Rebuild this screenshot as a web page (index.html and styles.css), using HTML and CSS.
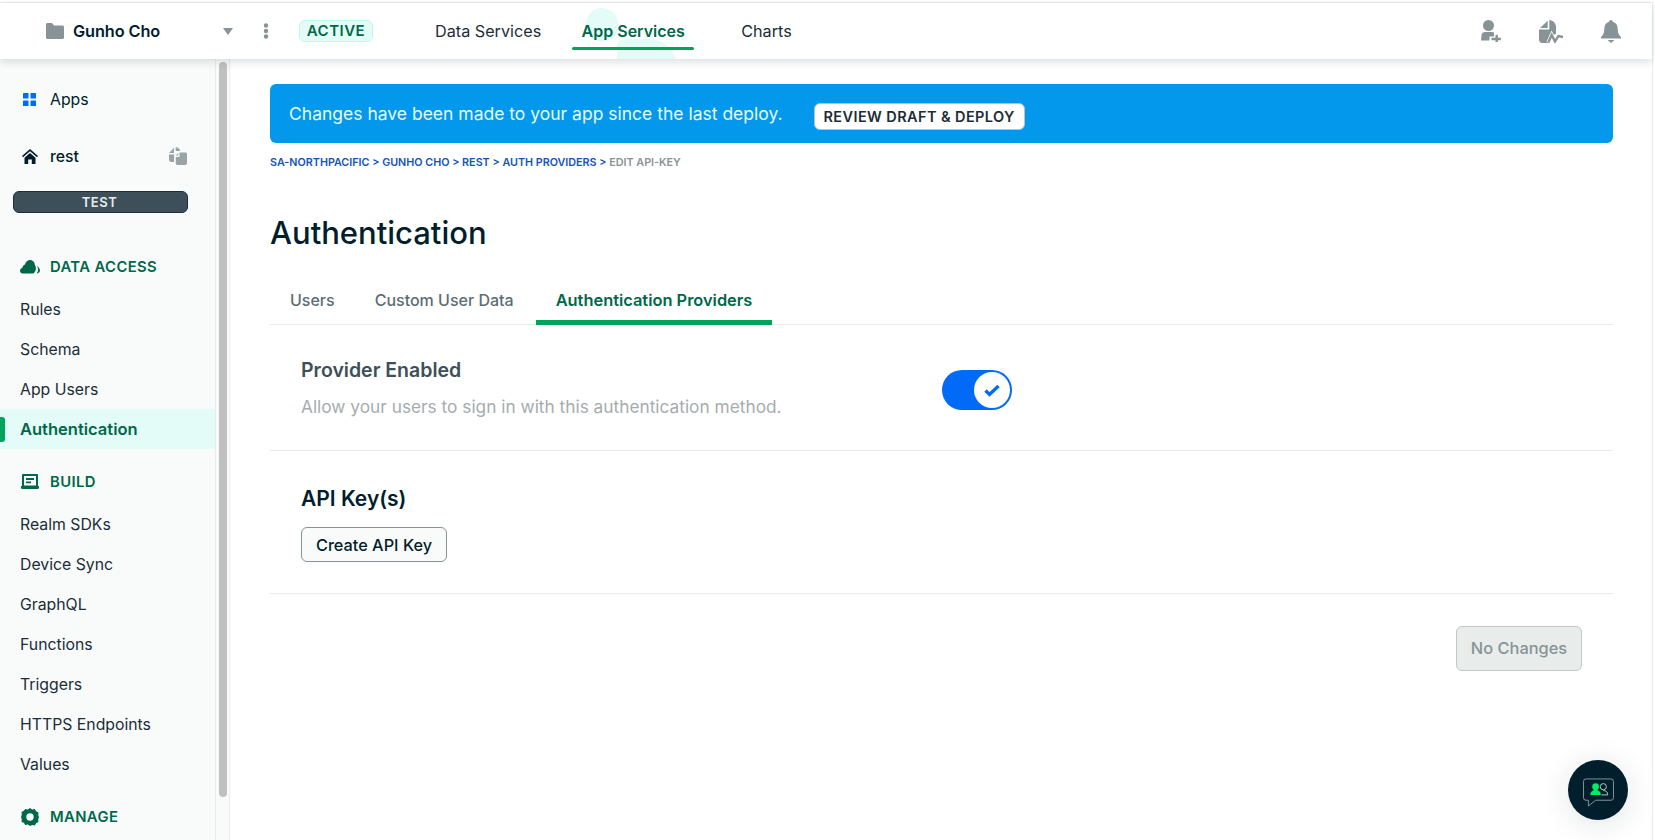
FILE: index.html
```html
<!DOCTYPE html>
<html lang="en">

<head>
  <meta charset="UTF-8">
  <meta name="viewport" content="width=device-width, initial-scale=1.0">
  <title>Authentication</title>
  <link rel="stylesheet" href="styles.css">
</head>

<body>
  <div class="window">
    <header class="topbar">
      <div class="org">
        <svg class="folder" viewBox="0 0 18 16"><path d="M0 1.500C0 .7.7 0 1.500 0H6l2 2.500h8.500c.8 0 1.500.7 1.500 1.500v10.500c0 .8-.7 1.500-1.500 1.500h-15C.7 16 0 15.300 0 14.500z"/></svg>
        <span class="org-name">Gunho Cho</span>
      </div>
      <svg class="caret" viewBox="0 0 10 7"><path d="M0 0h10L5 7z"/></svg>
      <svg class="dots" viewBox="0 0 6 16"><circle cx="3" cy="2.500" r="2.200"/><circle cx="3" cy="8" r="2.200"/><circle cx="3" cy="13.500" r="2.200"/></svg>
      <span class="status">ACTIVE</span>
      <nav class="topnav">
        <a class="topnav-item">Data Services</a>
        <a class="topnav-item active"><span class="hump"></span><span class="topnav-label">App Services</span></a>
        <a class="topnav-item">Charts</a>
      </nav>
      <div class="top-icons">
        <svg class="top-icon" viewBox="0 0 20 22"><circle cx="7.500" cy="5.500" r="5.500"/><path d="M0 20.500l.6-5.500C.8 13 2.200 12 4 12h7c.8 0 1.500.2 2 .6V16.500H8.500v4z"/><path d="M14.500 14.800h2.400v3h3v2.400h-3v1.800h-2.400v-1.800h-4v-2.400h4z"/></svg>
        <svg class="top-icon wide" viewBox="0 0 24 23"><path d="M1 8l7.700-7.300V8z"/><path d="M0 9.500h10.300V0c3.800.2 6.700 3.200 6.700 7v7l-3.500 1-4 8H3.200C1.400 23 0 21.600 0 19.800z"/><path d="M9.300 22.500l3.400-7.500 3.300 6.500 3.300-5.500 4.700 1" fill="none" stroke="#fff" stroke-width="4"/><path d="M9.300 22.500l3.400-7.500 3.300 6.500 3.300-5.500 4.700 1" fill="none" stroke="#889397" stroke-width="2.400"/></svg>
        <svg class="top-icon bell" viewBox="0 0 20 23"><path d="M10 0c1 0 1.800.8 1.800 1.800C15 2.600 16.700 5.200 16.700 9c0 3.800 1 6 3.300 8v1.500H0V17c2.300-2 3.300-4.200 3.300-8 0-3.800 1.700-6.400 4.900-7.200C8.200.8 9 0 10 0z"/><path d="M6.500 20h7L10 23z"/></svg>
      </div>
    </header>

    <div class="main">
      <aside class="sidebar">
        <div class="side-row apps">
          <svg class="apps-icon" viewBox="0 0 13 13"><rect width="5.500" height="5.500" rx=".6"/><rect x="7.500" width="5.500" height="5.500" rx=".6"/><rect y="7.500" width="5.500" height="5.500" rx=".6"/><rect x="7.500" y="7.500" width="5.500" height="5.500" rx=".6"/></svg>
          <span>Apps</span>
        </div>
        <div class="side-row app-row">
          <svg class="home-icon" viewBox="0 0 16 15"><path d="M8 0l8 7-1 1.200L8 2.300 1 8.200 0 7z"/><path d="M8 4l5.500 4.700V15H9.800v-4.500H6.200V15H2.500V8.700z"/></svg>
          <span class="app-name">rest</span>
          <svg class="copy-icon" viewBox="0 0 18 18"><path d="M0 6l5-5.200V6z"/><path d="M6.700 0c2.300.2 4.200 1.800 4.500 4H6.700z"/><path d="M0 7.500h5.200v1L5 15H2.200C1 15 0 14 0 12.800z"/><path d="M10.500 5.500h5.800c1 0 1.700.7 1.700 1.700v9.100c0 1-.7 1.700-1.700 1.700H8.500c-1 0-1.700-.7-1.700-1.700V10h3.700z"/><path d="M6.800 8.500l2.400-2.600v2.600z"/></svg>
        </div>
        <div class="env">TEST</div>

        <div class="side-head first">
          <svg class="head-icon" viewBox="0 0 20 14"><path d="M2.800 14C1.200 14 0 12.800 0 11.300 0 9.800 1 8.700 2.300 8.400 2.500 6.600 3.700 5.400 5 5 5.800 2 7.700.5 10 .5c2.800 0 4.800 2.300 5 5.300.8 1.200 1 2.700.8 4.200-.3 1.700-1.200 3.200-2.500 4z"/><path d="M16.800 6.500c1.900 1 3.200 2.600 3.200 4.500 0 1.500-1.300 2.800-3.400 3 .8-1 1.400-2.300 1.500-3.700.1-1.500-.5-2.800-1.300-3.800z"/></svg>
          <span>DATA ACCESS</span>
        </div>
        <ul class="side-list">
          <li class="side-item">Rules</li>
          <li class="side-item">Schema</li>
          <li class="side-item">App Users</li>
          <li class="side-item current">Authentication</li>
        </ul>

        <div class="side-head">
          <svg class="head-icon" viewBox="0 0 18 15"><path d="M2 0h14a1 1 0 0 1 1 1v11h1v1.500a1.500 1.500 0 0 1-1.500 1.500h-15A1.500 1.500 0 0 1 0 13.500V12h1V1a1 1 0 0 1 1-1zm1 2v9.500h12V2z"/><path d="M5 4h8v2H5zM5 7.500h5v1.700H5z"/></svg>
          <span>BUILD</span>
        </div>
        <ul class="side-list">
          <li class="side-item">Realm SDKs</li>
          <li class="side-item">Device Sync</li>
          <li class="side-item">GraphQL</li>
          <li class="side-item">Functions</li>
          <li class="side-item">Triggers</li>
          <li class="side-item">HTTPS Endpoints</li>
          <li class="side-item">Values</li>
        </ul>

        <div class="side-head">
          <svg class="head-icon gear" viewBox="0 0 18 18"><path fill-rule="evenodd" d="M9 0l2.200 1.500 2.600-.5 1.300 2.300 2.400 1.100-.3 2.700L18 9l-.8 2.400.3 2.700-2.400 1.100-1.300 2.300-2.600-.5L9 18l-2.200-1.500-2.600.5-1.300-2.300L.5 14.100l.3-2.700L0 9l.8-2.400-.3-2.700 2.400-1.100L4.200 1l2.600.5zm0 5.300a3.700 3.700 0 1 0 0 7.400 3.700 3.700 0 0 0 0-7.400z"/></svg>
          <span>MANAGE</span>
        </div>
      </aside>

      <div class="side-scroll"><div class="thumb"></div></div>

      <main class="content">
        <div class="banner">
          <span>Changes have been made to your app since the last deploy.</span>
          <button class="review">REVIEW DRAFT &amp; DEPLOY</button>
        </div>
        <div class="crumbs"><a>SA-NORTHPACIFIC</a> &gt; <a>GUNHO CHO</a> &gt; <a>REST</a> &gt; <a>AUTH PROVIDERS</a> &gt; <span class="crumb-last">EDIT API-KEY</span></div>
        <h1 class="title">Authentication</h1>
        <div class="tabs">
          <a class="tab">Users</a>
          <a class="tab">Custom User Data</a>
          <a class="tab active">Authentication Providers</a>
        </div>

        <section class="provider">
          <div class="provider-text">
            <div class="provider-title">Provider Enabled</div>
            <div class="provider-desc">Allow your users to sign in with this authentication method.</div>
          </div>
          <div class="toggle">
            <div class="knob">
              <svg viewBox="0 0 16 13"><path d="M1.500 6.500l4 4L14.500 2" fill="none" stroke="#016bf8" stroke-width="3.400"/></svg>
            </div>
          </div>
        </section>

        <section class="keys">
          <h2 class="keys-title">API Key(s)</h2>
          <button class="create">Create API Key</button>
        </section>

        <div class="actions">
          <button class="save" disabled>No Changes</button>
        </div>
      </main>
    </div>

    <button class="chat">
      <svg viewBox="0 0 32 30">
        <path d="M3 1h26a2.500 2.500 0 0 1 2.500 2.500v17a2.500 2.500 0 0 1-2.500 2.500H13l-7.500 6v-6H3A2.500 2.500 0 0 1 .5 20.500v-17A2.500 2.500 0 0 1 3 1z" fill="none" stroke="#89979b" stroke-width="1"/>
        <circle cx="13" cy="9" r="3.500" fill="#00ed64"/>
        <path d="M7.500 17.500c.2-3.500 2.500-5 5.500-5s5.300 1.500 5.500 5z" fill="#00ed64"/>
        <circle cx="21" cy="9" r="3.200" fill="none" stroke="#c1c7c6"/>
        <path d="M19 17.500h6.500c0-2.800-1.500-4.500-4.500-4.500" fill="none" stroke="#c1c7c6"/>
      </svg>
    </button>
  </div>
</body>

</html>
```

FILE: styles.css
```css
* {
  box-sizing: border-box;
}

html,
body {
  margin: 0;
  height: 100%;
  background: #fff;
  overflow: hidden;
}

body {
  font-family: Inter, "Liberation Sans", sans-serif;
  color: #001e2b;
}

ul {
  list-style: none;
  margin: 0;
  padding: 0;
}

button {
  font-family: inherit;
}

.window {
  position: relative;
  height: 838px;
  margin: 2px 2px 0 0;
  border-top: 1px solid #e8edeb;
  border-right: 1px solid #e8edeb;
  display: flex;
  flex-direction: column;
}

/* top bar */
.topbar {
  position: relative;
  z-index: 2;
  flex: none;
  height: 56px;
  display: flex;
  align-items: center;
  padding-left: 46px;
  background: #fff;
  box-shadow: 0 3px 8px rgba(0, 30, 43, .14);
  overflow: hidden;
}

.org {
  display: flex;
  align-items: center;
  width: 177px;
}

.folder {
  width: 18px;
  height: 16px;
  margin-right: 9px;
  fill: #889397;
}

.org-name {
  font-size: 16.300px;
  font-weight: 600;
  letter-spacing: -.1px;
}

.caret {
  width: 10px;
  height: 7px;
  fill: #889397;
}

.dots {
  width: 6px;
  height: 16px;
  margin-left: 30px;
  fill: #889397;
}

.status {
  margin-left: 30px;
  width: 74px;
  height: 22px;
  line-height: 20px;
  text-align: center;
  font-size: 15px;
  font-weight: 600;
  letter-spacing: .5px;
  color: #00684a;
  background: #e3fcf7;
  border: 1px solid #c0fae6;
  border-radius: 6px;
}

.topnav {
  display: flex;
  margin-left: 52px;
  height: 100%;
}

.topnav-item {
  position: relative;
  display: flex;
  align-items: center;
  justify-content: center;
  font-size: 16.200px;
  color: #1c2d38;
  padding: 0 10px;
  margin-right: 21px;
}

.topnav-item.active {
  width: 122px;
  padding: 0;
  margin-right: 37px;
  color: #00684a;
  font-weight: 600;
  font-size: 16px;
}

.topnav-item.active::after {
  content: "";
  position: absolute;
  left: 0;
  right: 0;
  top: 44px;
  height: 3px;
  border-radius: 2px;
  background: #00a35c;
}

.topnav-label {
  position: relative;
}

.hump {
  position: absolute;
  left: 14px;
  top: 5px;
  width: 92px;
  height: 60px;
}

.hump::before {
  content: "";
  position: absolute;
  left: 0;
  top: 0;
  width: 32px;
  height: 34px;
  border-radius: 16px;
  background: #e3fcf7;
}

.hump::after {
  content: "";
  position: absolute;
  left: 31px;
  top: 31px;
  width: 60px;
  height: 28px;
  border-radius: 8px 30px 0 0;
  background: #e3fcf7;
}

.top-icons {
  display: flex;
  align-items: center;
  margin-left: auto;
  margin-right: 31px;
}

.top-icon {
  width: 20px;
  height: 22px;
  fill: #889397;
}

.top-icon.wide {
  width: 24px;
  height: 23px;
  margin-left: 38px;
}

.top-icon.bell {
  margin-left: 38px;
  height: 23px;
}

/* sidebar */
.main {
  flex: 1;
  min-height: 0;
  display: flex;
}

.sidebar {
  flex: none;
  width: 215px;
  padding-top: 20px;
  background: #f9fbfa;
  overflow: hidden;
}

.side-row {
  display: flex;
  align-items: center;
  height: 40px;
  font-size: 15.800px;
}

.apps-icon {
  width: 13px;
  height: 13px;
  margin: 0 14px 0 23px;
  fill: #016bf8;
}

.app-row {
  margin-top: 17px;
}

.home-icon {
  width: 16px;
  height: 15px;
  margin: 0 12px 0 22px;
  fill: #001e2b;
}

.app-name {
  font-weight: 500;
}

.copy-icon {
  width: 18px;
  height: 18px;
  margin-left: auto;
  margin-right: 28px;
  fill: #9aa4a7;
}

.env {
  height: 22px;
  line-height: 20px;
  margin: 15px 27px 0 13px;
  padding-right: 2px;
  text-align: center;
  font-size: 13px;
  font-weight: 600;
  letter-spacing: .5px;
  color: #e8edeb;
  background: #3d4f58;
  border: 1px solid #1c2d38;
  border-radius: 6px;
}

.side-head {
  display: flex;
  align-items: center;
  height: 40px;
  margin-top: 13px;
  padding: 0 0 1px 20px;
  font-size: 14.800px;
  font-weight: 600;
  letter-spacing: .4px;
  color: #00684a;
}

.side-head.first {
  margin-top: 34px;
}

.head-icon {
  width: 20px;
  height: 15px;
  margin-right: 10px;
  fill: #00684a;
}

.head-icon.gear {
  height: 18px;
}

.side-list {
  margin-top: 2px;
}

.side-item {
  height: 40px;
  line-height: 42px;
  padding-left: 20px;
  font-size: 15.800px;
  color: #1c2d38;
}

.side-item.current {
  position: relative;
  line-height: 40px;
  color: #00684a;
  font-size: 16.500px;
  font-weight: 600;
  background: #e3fcf7;
}

.side-item.current::before {
  content: "";
  position: absolute;
  left: 0;
  top: 8px;
  width: 5px;
  height: 25px;
  border-radius: 0 3px 3px 0;
  background: #00a35c;
}

.side-scroll {
  flex: none;
  width: 15px;
  padding: 3px 2px 0 3px;
  background: #fafafa;
  border-left: 1px solid #e8edeb;
  border-right: 1px solid #e8edeb;
}

.thumb {
  height: 735px;
  border-radius: 4px;
  background: #c0c0c0;
}

/* content */
.content {
  flex: 1;
  min-width: 0;
  padding: 25px 39px 0 40px;
}

.banner {
  display: flex;
  align-items: center;
  height: 59px;
  padding-left: 19px;
  font-size: 17.500px;
  color: #e3fcf7;
  background: #0498ec;
  border-radius: 6px;
}

.review {
  height: 27px;
  margin-left: 31px;
  margin-top: 5px;
  padding: 0 9px;
  font-size: 14.500px;
  font-weight: 600;
  letter-spacing: .4px;
  color: #1c2d38;
  background: #fff;
  border: 1px solid #b8c4c2;
  border-radius: 6px;
}

.crumbs {
  margin-top: 13px;
  height: 14px;
  line-height: 14px;
  font-size: 10.750px;
  font-weight: 600;
  color: #1254b7;
}

.crumb-last {
  color: #889397;
}

.title {
  margin: 43px 0 0;
  height: 40px;
  line-height: 40px;
  font-size: 31px;
  font-weight: 500;
}

.tabs {
  display: flex;
  height: 46px;
  margin-top: 26px;
  border-bottom: 1px solid #e8edeb;
  font-size: 16px;
  color: #5c6c75;
}

.tab {
  height: 46px;
  line-height: 42px;
  padding: 0 20px;
  font-weight: 500;
}

.tab.active {
  margin-left: 2px;
  font-size: 16.400px;
  color: #00684a;
  font-weight: 600;
  border-bottom: 5px solid #00a35c;
  border-radius: 4px 4px 0 0;
}

.provider {
  display: flex;
  align-items: flex-start;
  height: 126px;
  padding: 32px 0 0 31px;
  border-bottom: 1px solid #e8edeb;
}

.provider-text {
  width: 641px;
}

.provider-title {
  font-size: 19.500px;
  font-weight: 600;
  line-height: 26px;
  color: #3d4f58;
}

.provider-desc {
  margin-top: 12px;
  font-size: 17.300px;
  line-height: 24px;
  color: #a5acae;
}

.toggle {
  width: 70px;
  height: 40px;
  margin-top: 13px;
  padding: 2px;
  display: flex;
  justify-content: flex-end;
  background: #016bf8;
  border-radius: 20px;
}

.knob {
  width: 36px;
  height: 36px;
  display: flex;
  align-items: center;
  justify-content: center;
  border-radius: 50%;
  background: #fff;
}

.knob svg {
  width: 16px;
  height: 13px;
}

.keys {
  height: 143px;
  padding: 34px 0 0 31px;
  border-bottom: 1px solid #e8edeb;
}

.keys-title {
  margin: 0;
  font-size: 21px;
  font-weight: 600;
  line-height: 28px;
}

.create {
  display: block;
  width: 146px;
  height: 35px;
  margin-top: 14px;
  font-size: 16.300px;
  font-weight: 500;
  color: #001e2b;
  background: #f9fbfa;
  border: 1px solid #889397;
  border-radius: 6px;
}

.actions {
  display: flex;
  justify-content: flex-end;
  padding: 32px 31px 0 0;
}

.save {
  width: 126px;
  height: 45px;
  padding-bottom: 3px;
  font-size: 16.400px;
  font-weight: 500;
  color: #889397;
  background: #e8edeb;
  border: 1px solid #c1c7c6;
  border-radius: 6px;
}

/* floating chat */
.chat {
  position: absolute;
  right: 24px;
  top: 757px;
  width: 60px;
  height: 60px;
  padding: 0;
  display: flex;
  align-items: center;
  justify-content: center;
  border: 0;
  border-radius: 50%;
  background: #001e2b;
  box-shadow: 0 4px 30px rgba(0, 30, 43, .12);
}

.chat svg {
  width: 31px;
  height: 29px;
  margin-top: 4px;
}
```
